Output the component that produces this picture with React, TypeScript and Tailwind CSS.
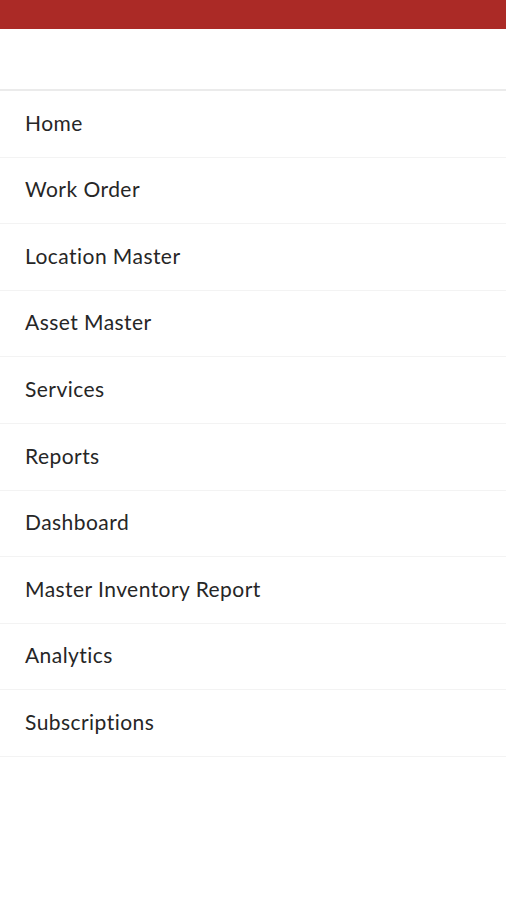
const menuItems = [
    "Home",
    "Work Order",
    "Location Master",
    "Asset Master",
    "Services",
    "Reports",
    "Dashboard",
    "Master Inventory Report",
    "Analytics",
    "Subscriptions",
];

export default function App() {
    return (
        <div className="min-h-[900px] w-full bg-white font-['Lato','Noto_Sans',sans-serif] text-[#262626]">
            <div className="h-[29px] w-full bg-[#ab2a26]" />
            <div className="h-[60px] w-full" />
            <nav className="border-t-2 border-[#ebebeb]">
                {menuItems.map((item) => (
                    <div
                        key={item}
                        className="flex h-[66.6px] items-center border-b border-[#f3f3f3] pb-[3px] pl-[25px] text-[21px] tracking-[0.45px]"
                    >
                        {item}
                    </div>
                ))}
            </nav>
        </div>
    );
}
